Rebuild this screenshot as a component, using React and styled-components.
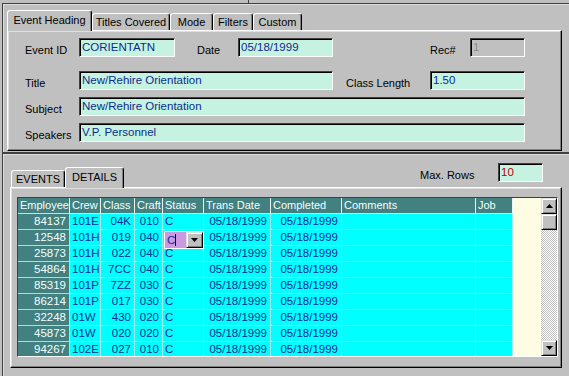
import styled, { createGlobalStyle } from 'styled-components'

const GlobalStyle = createGlobalStyle`
    html, body {
        margin:0;
        padding:0;
        background:#c0c0c0;
    }
    body {
        font-family: 'Liberation Sans', Arial, sans-serif;
        font-size:11px;
        color:#000;
    }
`

const upperTabs = [
    { label: 'Event Heading', w: 85, active: true },
    { label: 'Titles Covered', w: 78 },
    { label: 'Mode', w: 43 },
    { label: 'Filters', w: 40 },
    { label: 'Custom', w: 49 },
]

const columns = [
    { key: 'emp', label: 'Employee', w: 52, align: 'right' },
    { key: 'crew', label: 'Crew', w: 31, align: 'left' },
    { key: 'cls', label: 'Class', w: 34, align: 'right' },
    { key: 'craft', label: 'Craft', w: 28, align: 'right' },
    { key: 'status', label: 'Status', w: 41, align: 'left' },
    { key: 'trans', label: 'Trans Date', w: 67, align: 'right' },
    { key: 'done', label: 'Completed', w: 71, align: 'right' },
    { key: 'comments', label: 'Comments', w: 134, align: 'left' },
    { key: 'job', label: 'Job', w: 37, align: 'left' },
]

const rows = [
    ['84137', '101E', '04K', '010'],
    ['12548', '101H', '019', '040'],
    ['25873', '101H', '022', '040'],
    ['54864', '101H', '7CC', '040'],
    ['85319', '101P', '7ZZ', '030'],
    ['86214', '101P', '017', '030'],
    ['32248', '01W', '430', '020'],
    ['45873', '01W', '020', '020'],
    ['94267', '102E', '027', '010'],
].map(([emp, crew, cls, craft]) => ({
    emp, crew, cls, craft,
    status: 'C',
    trans: '05/18/1999',
    done: '05/18/1999',
    comments: '',
    job: '',
}))

// row / column of the cell that is being edited
const editing = { row: 1, col: 'status' }

const Arrow = ({ down }) => (
    <svg width="7" height="4" viewBox="0 0 7 4">
        {down
            ? <polygon points="0,0 7,0 3.5,4" fill="#000" />
            : <polygon points="0,4 7,4 3.5,0" fill="#000" />}
    </svg>
)

const App = () => {
    return (
        <WindowStyled>
            <GlobalStyle />
            <TopStrip><div /></TopStrip>

            <Frame h={150} pl={4} pt={6} bottom>
                <TabStrip>
                    {upperTabs.map(t => (
                        <Tab key={t.label} w={t.w} active={t.active}>{t.label}</Tab>
                    ))}
                </TabStrip>
                <Page w={555} h={121}>
                    <Form>
                        <Row>
                            <Label w={54}>Event ID</Label>
                            <Field w={96}>CORIENTATN</Field>
                            <Label w={41} ml={22}>Date</Label>
                            <Field w={95}>05/18/1999</Field>
                            <Label w={40} ml={97}>Rec#</Label>
                            <Field w={55} disabled>1</Field>
                        </Row>
                        <Row mt={14}>
                            <Label w={54}>Title</Label>
                            <Field w={254}>New/Rehire Orientation</Field>
                            <Label w={84} ml={13}>Class Length</Label>
                            <Field w={95}>1.50</Field>
                        </Row>
                        <Row mt={7}>
                            <Label w={54}>Subject</Label>
                            <Field w={446}>New/Rehire Orientation</Field>
                        </Row>
                        <Row mt={7}>
                            <Label w={54}>Speakers</Label>
                            <Field w={446}>V.P. Personnel</Field>
                        </Row>
                    </Form>
                </Page>
            </Frame>

            <Frame h={223} pl={7} pt={0}>
                <TabRow>
                    <Tab w={54}>EVENTS</Tab>
                    <Tab w={59} active>DETAILS</Tab>
                    <MaxRows>
                        <Label w={78}>Max. Rows</Label>
                        <Field w={45} red>10</Field>
                    </MaxRows>
                </TabRow>
                <Page w={552} h={181}>
                    <GridBox>
                        <TableArea>
                            <GridRow>
                                {columns.map(c => (
                                    <HeadCell key={c.key} w={c.w}>{c.label}</HeadCell>
                                ))}
                            </GridRow>
                            {rows.map((r, i) => (
                                <GridRow key={i}>
                                    {columns.map(c => {
                                        const isEdit = i === editing.row && c.key === editing.col
                                        return (
                                            <Cell key={c.key} w={c.w} align={c.align} fixed={c.key === 'emp'}>
                                                {isEdit ? (
                                                    <Editor>
                                                        <EditorText>{r[c.key]}<Caret /></EditorText>
                                                        <EditorButton><Arrow down /></EditorButton>
                                                    </Editor>
                                                ) : r[c.key]}
                                            </Cell>
                                        )
                                    })}
                                </GridRow>
                            ))}
                        </TableArea>
                        <ScrollBar>
                            <ScrollButton><Arrow /></ScrollButton>
                            <ScrollButton />
                            <ScrollTrack />
                            <ScrollButton><Arrow down /></ScrollButton>
                        </ScrollBar>
                    </GridBox>
                </Page>
            </Frame>
        </WindowStyled>
    )
}

const WindowStyled = styled.div`
    width:569px;
    height:376px;
    overflow:hidden;
    background:#c0c0c0;
`

const TopStrip = styled.div`
    height:3px;
    display:flex;

    div {
        width:248px;
        border-right:1px solid #404040;
    }
`

const Frame = styled.div`
    box-sizing:border-box;
    margin-left:2px;
    height:${p => p.h}px;
    padding:${p => p.pt}px 0 0 ${p => p.pl}px;
    border-top:1px solid #404040;
    border-left:1px solid #404040;
    border-bottom:${p => p.bottom ? '1px solid #404040' : 'none'};
    box-shadow: inset 1px 1px 0 #dcdcdc;
`

const TabStrip = styled.div`
    display:flex;
    align-items:flex-end;
    height:20px;
`

const Tab = styled.div`
    box-sizing:border-box;
    position:relative;
    z-index:${p => p.active ? 2 : 1};
    width:${p => p.w}px;
    height:${p => p.active ? 21 : 17}px;
    margin-bottom:${p => p.active ? -1 : 0}px;
    background:#c0c0c0;
    border-top:1px solid #fff;
    border-left:1px solid #fff;
    border-right:1px solid #000;
    border-radius:3px 3px 0 0;
    box-shadow: inset -1px 0 0 #808080;
    display:flex;
    align-items:center;
    justify-content:center;
    padding-bottom:${p => p.active ? 2 : 0}px;
    white-space:nowrap;
    font-size:11px;
`

const Page = styled.div`
    box-sizing:border-box;
    position:relative;
    width:${p => p.w}px;
    height:${p => p.h}px;
    background:#c0c0c0;
    border-top:1px solid #fff;
    border-left:1px solid #fff;
    border-right:1px solid #000;
    border-bottom:1px solid #000;
    box-shadow: inset -1px -1px 0 #808080, inset 1px 1px 0 #dfdfdf;
`

const Form = styled.div`
    padding:7px 0 0 17px;
`

const Row = styled.div`
    display:flex;
    align-items:center;
    margin-top:${p => p.mt || 0}px;
`

const Label = styled.div`
    width:${p => p.w}px;
    margin-left:${p => p.ml || 0}px;
    padding-top:4px;
    white-space:nowrap;
    font-size:11px;
    color:#000;
`

const Field = styled.div`
    box-sizing:border-box;
    width:${p => p.w}px;
    height:19px;
    padding:0 2px 2px;
    display:flex;
    align-items:center;
    background:${p => p.disabled ? '#c0c0c0' : '#c6f2e2'};
    color:${p => p.disabled ? '#8a8a8a' : p.red ? '#c00000' : '#0c2c8c'};
    border-top:1px solid #404040;
    border-left:1px solid #404040;
    border-right:1px solid #fff;
    border-bottom:1px solid #fff;
    box-shadow: inset 1px 1px 0 #000;
    font-size:11.5px;
    white-space:nowrap;
`

const TabRow = styled.div`
    box-sizing:border-box;
    display:flex;
    align-items:flex-end;
    height:33px;
    width:552px;
    padding:0 19px 0 1px;
`

const MaxRows = styled.div`
    display:flex;
    align-items:center;
    align-self:flex-start;
    margin:9px 0 0 auto;
`

const GridBox = styled.div`
    box-sizing:border-box;
    display:flex;
    width:541px;
    height:160px;
    margin:9px 0 0 6px;
    border-top:1px solid #404040;
    border-left:1px solid #404040;
    border-right:1px solid #fff;
    border-bottom:1px solid #fff;
    overflow:hidden;
`

const TableArea = styled.div`
    flex:1;
    background:#fffce4;
    overflow:hidden;
`

const GridRow = styled.div`
    display:flex;
`

const HeadCell = styled.div`
    box-sizing:border-box;
    width:${p => p.w}px;
    height:16px;
    padding:0 1px 1px 2px;
    display:flex;
    align-items:center;
    background:#438080;
    color:#f2ffff;
    border-right:1px solid #e8f4f4;
    border-bottom:1px solid #d0dede;
    white-space:nowrap;
    overflow:hidden;
    font-size:11px;
`

const Cell = styled.div`
    box-sizing:border-box;
    position:relative;
    width:${p => p.w}px;
    height:16px;
    padding:0 ${p => p.align === 'right' ? 3 : 2}px 1px;
    display:flex;
    align-items:center;
    justify-content:${p => p.align === 'right' ? 'flex-end' : 'flex-start'};
    background:${p => p.fixed ? '#438080' : '#00ffff'};
    color:${p => p.fixed ? '#f2ffff' : '#142c94'};
    border-right:1px solid ${p => p.fixed ? '#c4d4d4' : '#a6e8e8'};
    border-bottom:1px solid ${p => p.fixed ? '#c4d4d4' : '#a6e8e8'};
    white-space:nowrap;
    font-size:11.5px;
`

const Editor = styled.div`
    position:absolute;
    left:1px;
    top:1px;
    z-index:3;
    box-sizing:border-box;
    width:40px;
    height:18px;
    display:flex;
    background:#fff;
    border:1px solid #fff;
`

const EditorText = styled.div`
    width:19px;
    display:flex;
    align-items:center;
    padding-left:2px;
    background:#cc99e0;
    color:#142c94;
`

const Caret = styled.span`
    display:inline-block;
    width:1px;
    height:12px;
    background:#000;
`

const EditorButton = styled.div`
    box-sizing:border-box;
    flex:1;
    display:flex;
    align-items:center;
    justify-content:center;
    background:#c0c0c0;
    border-top:1px solid #dfdfdf;
    border-left:1px solid #dfdfdf;
    border-right:1px solid #000;
    border-bottom:1px solid #000;
    box-shadow: inset 1px 1px 0 #fff, inset -1px -1px 0 #808080;
`

const ScrollBar = styled.div`
    width:16px;
    display:flex;
    flex-direction:column;
`

const ScrollButton = styled.div`
    box-sizing:border-box;
    width:16px;
    height:16px;
    display:flex;
    align-items:center;
    justify-content:center;
    background:#c0c0c0;
    border-top:1px solid #dfdfdf;
    border-left:1px solid #dfdfdf;
    border-right:1px solid #000;
    border-bottom:1px solid #000;
    box-shadow: inset 1px 1px 0 #fff, inset -1px -1px 0 #808080;
`

const ScrollTrack = styled.div`
    flex:1;
    background: repeating-conic-gradient(#c0c0c0 0% 25%, #ffffff 0% 50%) 0 0 / 2px 2px;
`

export default App
